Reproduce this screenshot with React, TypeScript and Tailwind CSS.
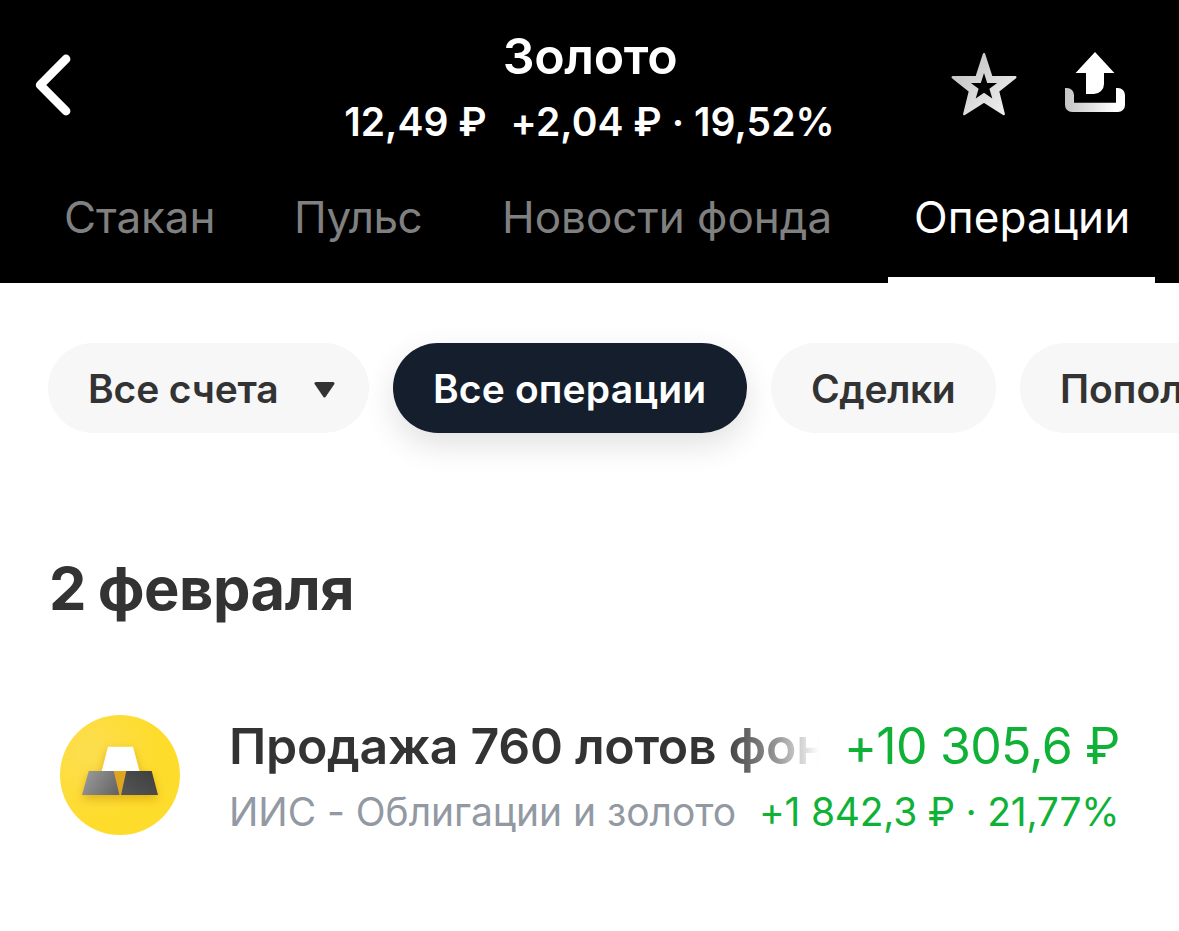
import React from "react";

function Text({ children, className = "" }: { children: React.ReactNode; className?: string }) {
  return <span className={"block shrink-0 whitespace-pre " + className}>{children}</span>;
}

function BackIcon() {
  return (
    <svg className="h-[70px] w-[50px]" viewBox="30 50 50 70" fill="none" stroke="#fff" strokeWidth="8.8" strokeLinecap="round" strokeLinejoin="round">
      <path d="M66 59L40.2 85L66 111" />
    </svg>
  );
}

function StarIcon() {
  return (
    <svg className="h-[70px] w-[70px]" viewBox="949 49 70 70">
      <defs>
        <linearGradient id="star" x1="0" y1="0" x2="1" y2="1">
          <stop offset="0" stopColor="#bcbcbc" />
          <stop offset="1" stopColor="#f4f4f4" />
        </linearGradient>
      </defs>
      <path
        fill="url(#star)"
        stroke="url(#star)"
        strokeWidth="2.4"
        strokeLinejoin="round"
        d="M984 54.2L991.4 77.2H1015.3L998 91L1003.7 114L984 101.6L964.3 114L970 91L952.7 77.2H976.6Z"
      />
      <path fill="#000" d="M984 73L987.2 83H997.2L989.4 88.8L992.3 98.6L984 92.8L975.7 98.6L978.6 88.8L970.8 83H980.8Z" />
    </svg>
  );
}

function ShareIcon() {
  return (
    <svg className="h-[66px] w-[66px]" viewBox="1062 49 66 66">
      <defs>
        <linearGradient id="tray" x1="0" y1="0" x2="1" y2="0">
          <stop offset="0" stopColor="#c4c4c4" />
          <stop offset="0.85" stopColor="#fff" />
        </linearGradient>
      </defs>
      <path fill="#fff" d="M1095 52L1114.4 73H1104V84A10 10 0 0 1 1094 94H1086V73H1075.6Z" />
      <path fill="url(#tray)" d="M1065 88H1067A7 7 0 0 1 1074 95V102.7H1116V88H1118A7 7 0 0 1 1125 95V105A7 7 0 0 1 1118 112H1072A7 7 0 0 1 1065 105Z" />
    </svg>
  );
}

function GoldIcon() {
  return (
    <svg className="h-[120px] w-[120px]" viewBox="60 715 120 120">
      <defs>
        <radialGradient id="coin" cx="0.22" cy="0.3" r="0.6">
          <stop offset="0" stopColor="#fcde50" />
          <stop offset="1" stopColor="#fedc2c" />
        </radialGradient>
        <linearGradient id="bar" x1="0" y1="0.3" x2="1" y2="0.7">
          <stop offset="0" stopColor="#999" />
          <stop offset="1" stopColor="#666" />
        </linearGradient>
        <linearGradient id="dark" x1="0" y1="1" x2="1" y2="0">
          <stop offset="0" stopColor="#555" />
          <stop offset="1" stopColor="#3e3e3e" />
        </linearGradient>
        <filter id="soft" x="-50%" y="-50%" width="200%" height="200%">
          <feGaussianBlur stdDeviation="5" />
        </filter>
      </defs>
      <circle cx="120" cy="775" r="60" fill="url(#coin)" />
      <path d="M108 750H133L140 774H152L158 799H82L89 774H101Z" fill="#c98f00" opacity="0.55" filter="url(#soft)" />
      <path d="M113.5 771H126.5L120.5 795H119.5Z" fill="#e0a520" />
      <path d="M108 746.7H133L139.5 771H101.7Z" fill="#fff" />
      <path d="M88.7 771H113.7L119.5 795H82Z" fill="url(#bar)" />
      <path d="M126.3 771H151.7L158 795H121Z" fill="url(#dark)" />
    </svg>
  );
}

function Chip({ children, className = "" }: { children: React.ReactNode; className?: string }) {
  return <button className={"flex h-[90px] shrink-0 items-center rounded-[45px] px-10 " + className}>{children}</button>;
}

export default function App() {
  return (
    <div className="h-[931px] w-[1179px] overflow-hidden bg-white font-['Inter','Noto_Sans',sans-serif] text-[#333]">
      <header className="flex h-[283px] flex-col bg-black text-white">
        <div className="flex h-[170px] shrink-0 items-start pl-[30px]">
          <div className="pt-[50px]">
            <BackIcon />
          </div>
          <div className="ml-[240px] flex w-[540px] flex-col items-center pt-[31px]">
            <Text className="text-[50px] leading-[50px] font-semibold tracking-[-0.3px]">Золото</Text>
            <div className="mt-[21px] flex gap-[24px] pr-[1px] text-[39px] leading-[39px] font-[580]">
              <Text className="tracking-[0px]">12,49 ₽</Text>
              <Text className="tracking-[0.05px]">+2,04 ₽ · 19,52%</Text>
            </div>
          </div>
          <div className="ml-[89px] flex items-start gap-[43px] pt-[49px]">
            <StarIcon />
            <ShareIcon />
          </div>
        </div>
        <nav className="flex flex-1 pl-[38px] text-[44px] leading-[44px] text-[#808080]">
          <Text className="w-[230px] pt-[25px] pl-[26px] tracking-[-0.1px]">Стакан</Text>
          <Text className="w-[208px] pt-[25px] pl-[26px] tracking-[-0.5px]">Пульс</Text>
          <Text className="w-[412px] pt-[25px] pl-[26px]">Новости фонда</Text>
          <Text className="w-[267px] border-b-6 border-white pt-[25px] pl-[26px] tracking-[0.1px] text-white">Операции</Text>
        </nav>
      </header>
      <main>
        <div className="flex gap-6 pt-[60px] pl-12 text-[39px] leading-[39px] font-semibold">
          <Chip className="w-[321px] bg-[#f7f7f7]">
            <Text className="tracking-[-0.15px]">Все счета</Text>
            <svg className="mt-[4px] ml-[35px] h-[18px] w-[21px] shrink-0" viewBox="0 0 21 18">
              <path d="M2 2.5H19L10.5 15Z" fill="#333" stroke="#333" strokeWidth="3" strokeLinejoin="round" />
            </svg>
          </Chip>
          <Chip className="w-[354px] bg-[#151e2c] text-white shadow-[0_12px_32px_rgba(0,0,0,0.12)]">
            <Text className="tracking-[0.15px]">Все операции</Text>
          </Chip>
          <Chip className="w-[225px] bg-[#f7f7f7]">
            <Text className="tracking-[-0.4px]">Сделки</Text>
          </Chip>
          <Chip className="bg-[#f7f7f7]">
            <Text>Попол</Text>
          </Chip>
        </div>
        <h2 className="pt-[125px] pl-[49px] text-[59.5px] leading-[60px] font-bold tracking-[-0.45px] [word-spacing:-2px]">2 февраля</h2>
        <article className="flex pt-[97px] pl-[60px]">
          <GoldIcon />
          <div className="ml-[49px] flex w-[900px] flex-col">
            <div className="-mt-px flex text-[50px] leading-[64px]">
              <Text className="w-[615px] tracking-[-0.3px]">
                <span className="block w-[590px] bg-linear-to-r from-[#333] from-[83%] via-[#333]/50 via-[93%] to-transparent to-100% bg-clip-text font-[580] text-transparent">Продажа 760 лотов фон</span>
              </Text>
              <Text className="tracking-[-0.75px] text-[#0fb137]">+10 305,6 ₽</Text>
            </div>
            <div className="mt-[7px] flex text-[39px] leading-[54px]">
              <Text className="w-[530px] tracking-[-0.05px] text-[#9299a2]">ИИС - Облигации и золото</Text>
              <Text className="tracking-[-0.25px] text-[#0fb137]">+1 842,3 ₽ · 21,77%</Text>
            </div>
          </div>
        </article>
      </main>
    </div>
  );
}
